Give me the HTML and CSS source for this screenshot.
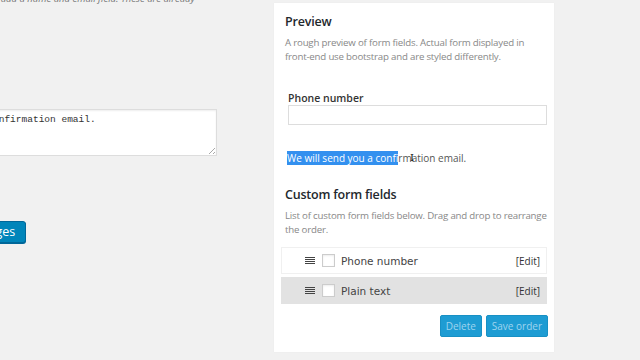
FILE: index.html
```html
<!DOCTYPE html>
<html>
<head>
<meta charset="utf-8">
<link rel="stylesheet" href="styles.css">
</head>
<body>
<div class="page">
  <div class="left">
    <div class="left-inner">
      <p class="help">If you add a name and email field. These are already</p>
      <div class="textarea">We will send you a confirmation email.<span class="grip"></span></div>
      <button class="primary">Save Changes</button>
    </div>
  </div>
  <div class="panel">
    <h2 class="title">Preview</h2>
    <p class="desc">A rough preview of form fields. Actual form displayed in front-end use bootstrap and are styled differently.</p>
    <div class="preview-form">
      <label class="field-label">Phone number</label>
      <div class="input"></div>
      <p class="confirm"><span class="sel">We will send you a conf</span>irm<span class="cursor">I</span>ation email.</p>
    </div>
    <h2 class="title title2">Custom form fields</h2>
    <p class="desc">List of custom form fields below. Drag and drop to rearrange the order.</p>
    <ul class="list">
      <li class="item">
        <span class="handle"><i></i><i></i><i></i><i></i></span>
        <span class="check"></span>
        <span class="name">Phone number</span>
        <span class="edit">[Edit]</span>
      </li>
      <li class="item item-alt">
        <span class="handle"><i></i><i></i><i></i><i></i></span>
        <span class="check"></span>
        <span class="name">Plain text</span>
        <span class="edit">[Edit]</span>
      </li>
    </ul>
    <div class="actions">
      <button class="btn">Delete</button>
      <button class="btn">Save order</button>
    </div>
  </div>
</div>
</body>
</html>
```

FILE: styles.css
```css
html, body {
  margin: 0;
  padding: 0;
  background: #f1f1f1;
  width: 640px;
  height: 360px;
  overflow: hidden;
}
body {
  font-family: "Open Sans", "Noto Sans", sans-serif;
  color: #444;
}
.page {
  display: flex;
  align-items: flex-start;
}
.left {
  width: 274px;
  height: 360px;
  overflow: hidden;
  flex: none;
}
.left-inner {
  margin-left: -220px;
  width: 440px;
  display: flex;
  flex-direction: column;
  align-items: flex-start;
}
.help {
  margin: -8px 0 0 0;
  font-size: 9.5px;
  line-height: 14px;
  font-style: italic;
  color: #777;
  white-space: nowrap;
  padding-left: 195px;
}
.textarea {
  position: relative;
  margin-top: 103px;
  margin-left: 92px;
  width: 331px;
  height: 35px;
  background: #fff;
  border: 1px solid #ddd;
  box-shadow: inset 0 1px 2px rgba(0,0,0,0.07);
  padding: 4px 6px 6px;
  font-family: "Liberation Mono", "DejaVu Sans Mono", monospace;
  font-size: 9.5px;
  line-height: 12px;
  color: #333;
  white-space: nowrap;
}
.grip {
  position: absolute;
  right: 1px;
  bottom: 1px;
  width: 6px;
  height: 6px;
  background: linear-gradient(135deg, transparent 45%, #aaa 46%, #aaa 55%, transparent 56%, transparent 75%, #aaa 76%, #aaa 85%, transparent 86%);
}
.primary {
  margin-top: 65px;
  margin-left: 144px;
  height: 22px;
  padding: 0 10px;
  background: #0085ba;
  border: 1px solid #006799;
  border-radius: 3px;
  color: #fff;
  font-family: "Open Sans", sans-serif;
  font-size: 12.5px;
  line-height: 20px;
  box-shadow: 0 1px 0 #006799;
}
.panel {
  margin-top: 3px;
  width: 262px;
  height: 349px;
  background: #fff;
  padding: 0 7px 0 11px;
  flex: none;
  box-shadow: 0 0 1px rgba(0,0,0,0.06);
}
.title {
  margin: 11px 0 0 0;
  font-size: 12.5px;
  line-height: 16px;
  font-weight: 600;
  letter-spacing: -0.2px;
  color: #23282d;
}
.title2 {
  margin-top: 22px;
}
.desc {
  margin: 6px 0 0 0;
  font-size: 9.7px;
  letter-spacing: -0.2px;
  line-height: 14px;
  color: #888;
}
.preview-form {
  padding-left: 3px;
  margin-top: 27px;
}
.field-label {
  display: block;
  font-size: 10.5px;
  line-height: 14px;
  font-weight: 600;
  color: #333;
}
.input {
  height: 18px;
  border: 1px solid #ddd;
  margin-top: 0;
}
.confirm {
  margin: 26px 0 0 -1px;
  font-size: 10px;
  line-height: 14px;
  color: #555;
  position: relative;
}
.sel {
  background: #3390ef;
  color: #fff;
}
.cursor {
  position: absolute;
  left: 123px;
  top: 1px;
  font-family: "DejaVu Serif", serif;
  font-size: 10px;
  line-height: 12px;
  color: #111;
  letter-spacing: -6px;
  width: 0;
}
.list {
  list-style: none;
  margin: 10px 0 0 -4px;
  padding: 0;
  display: flex;
  flex-direction: column;
  gap: 3px;
}
.item {
  height: 25px;
  border: 1px solid #f0f0f0;
  background: #fff;
  display: flex;
  align-items: center;
  padding: 0 6px 0 23px;
  font-family: "DejaVu Sans", Verdana, sans-serif;
  font-size: 10.5px;
  color: #444;
}
.item-alt {
  background: #e2e2e2;
  border-color: #e2e2e2;
}
.handle {
  width: 10px;
  display: flex;
  flex-direction: column;
  gap: 1px;
  margin-right: 7px;
}
.handle i {
  display: block;
  height: 1px;
  background: #444;
}
.check {
  width: 11px;
  height: 11px;
  border: 1px solid #ccc;
  background: #fff;
  margin-right: 6px;
  box-shadow: inset 0 1px 2px rgba(0,0,0,0.08);
}
.name {
  flex: 1;
}
.edit {
  font-family: "Open Sans", sans-serif;
  font-size: 10px;
  color: #333;
}
.actions {
  display: flex;
  justify-content: flex-end;
  gap: 4px;
  margin-top: 11px;
  margin-right: -1px;
}
.btn {
  height: 22px;
  padding: 0 5px;
  background: #1e9cd3;
  border: 1px solid #1890c4;
  border-radius: 2px;
  color: #9fd4ef;
  font-family: "Open Sans", sans-serif;
  font-size: 10px;
  line-height: 20px;
}
```
